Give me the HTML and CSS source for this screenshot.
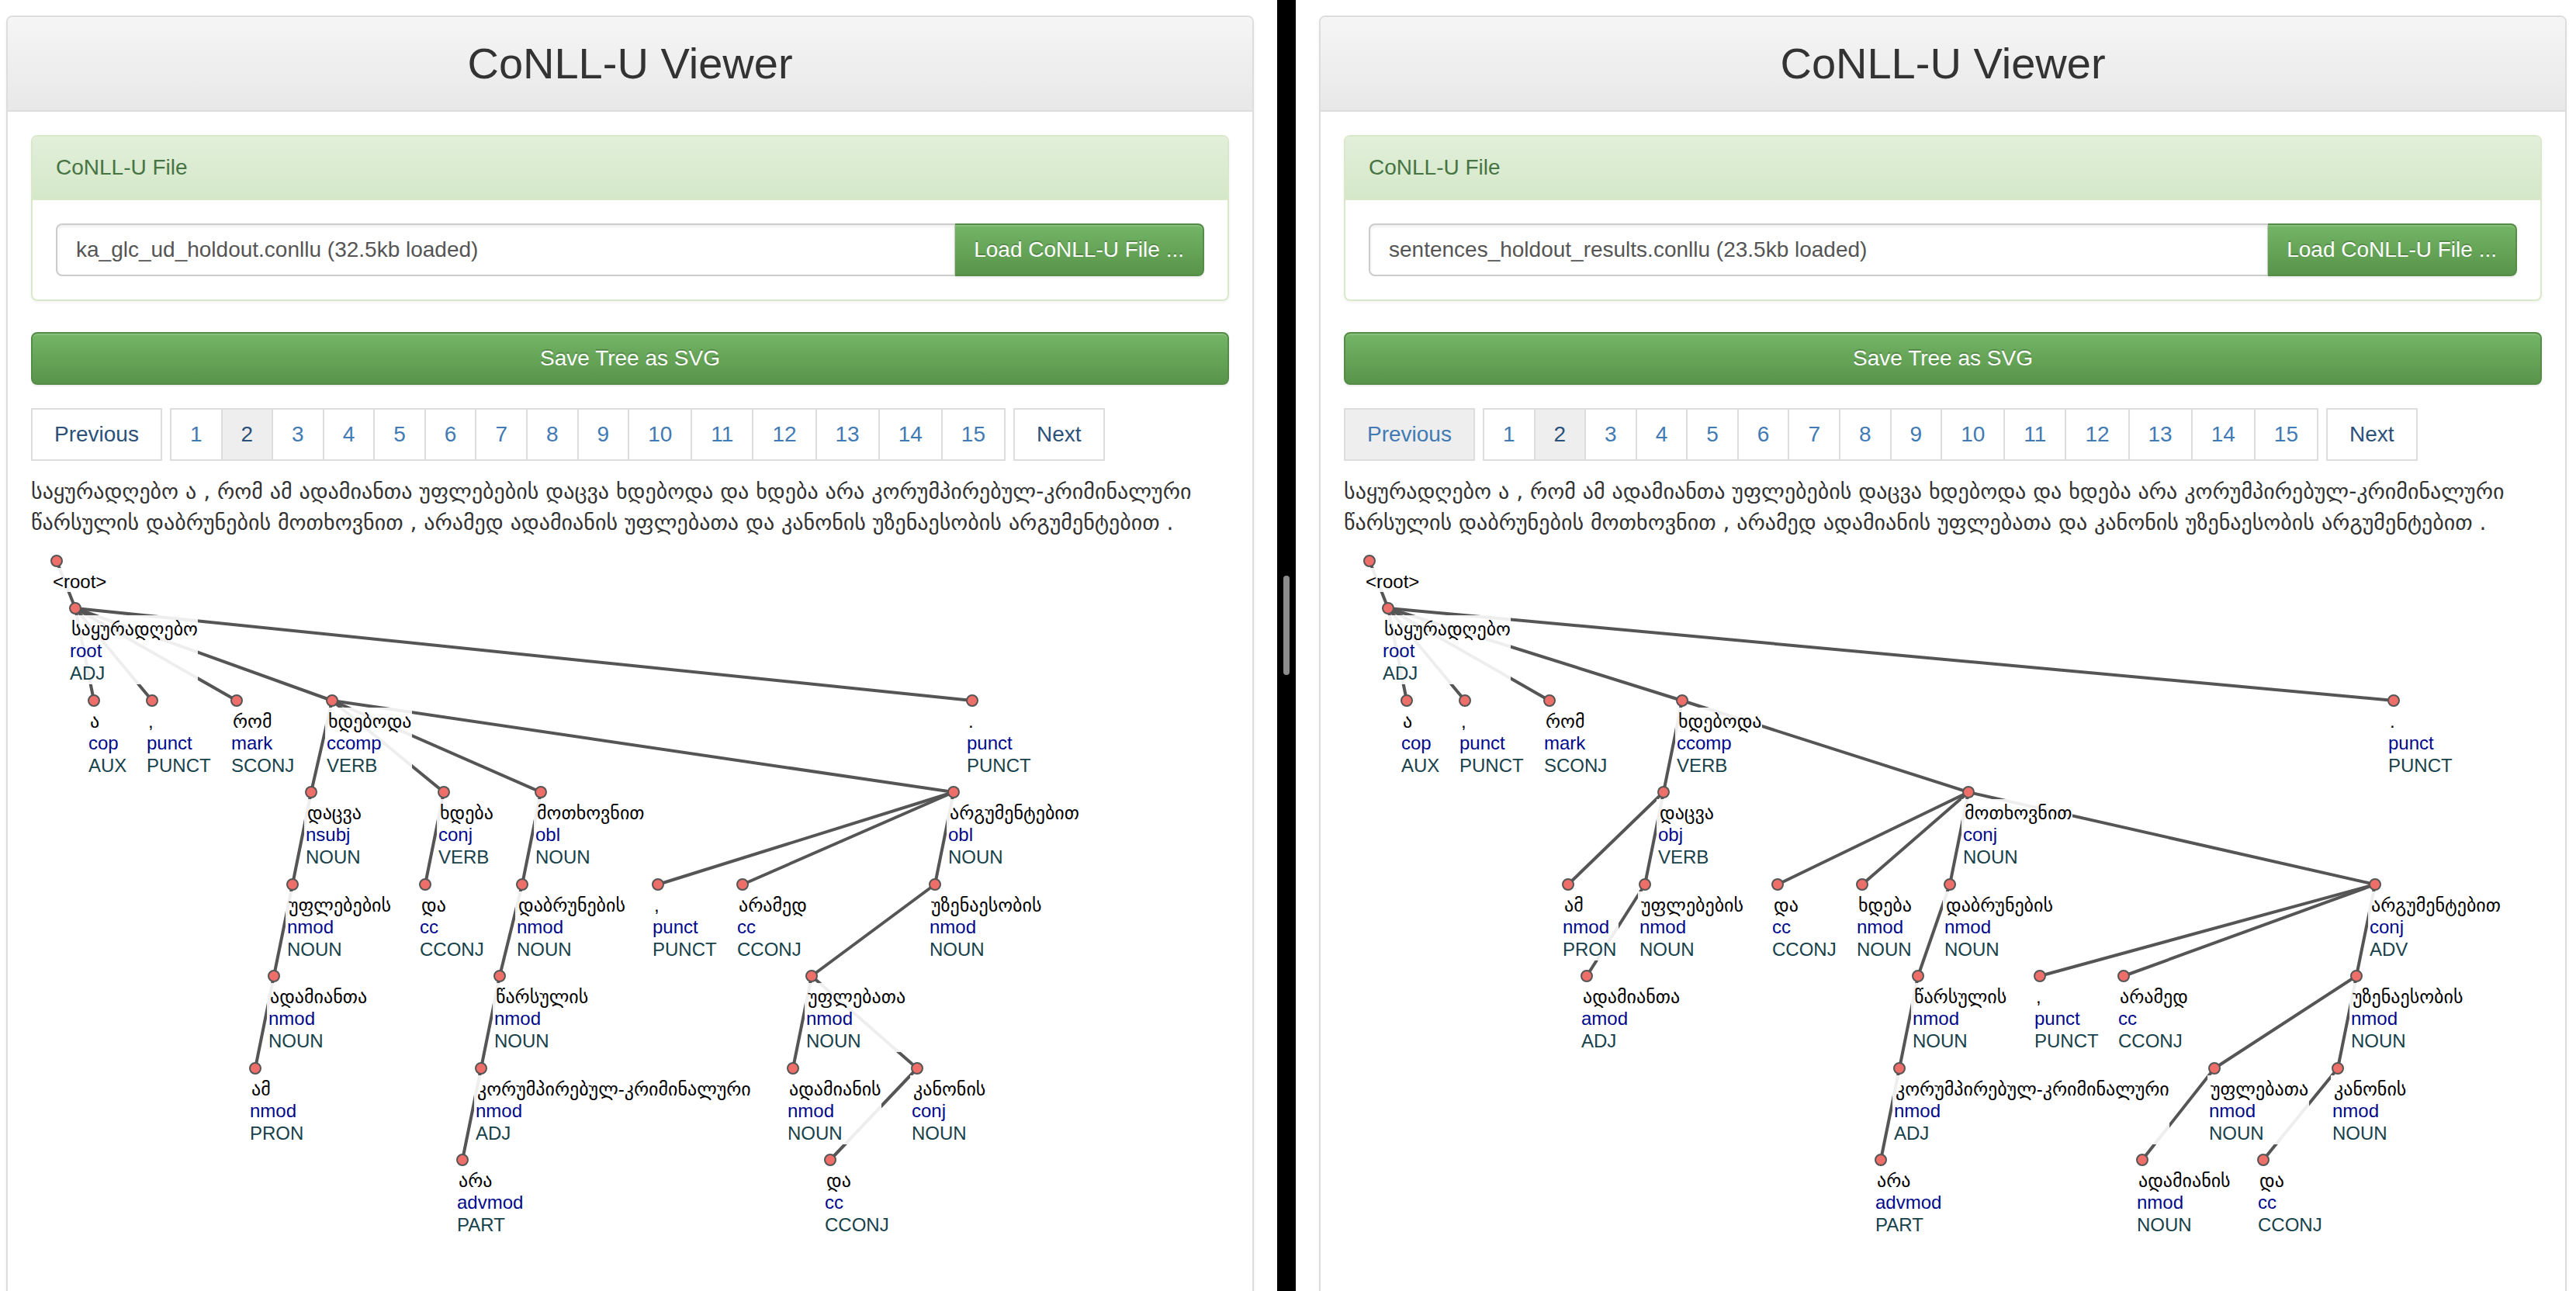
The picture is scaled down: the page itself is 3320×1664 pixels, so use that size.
FILE: index.html
```html
<!DOCTYPE html>
<html lang="en">
<head>
<meta charset="utf-8">
<title>CoNLL-U Viewer</title>
<link rel="stylesheet" href="styles.css">
</head>
<body>
<div class="split">
  <main class="pane pane-left">
    <section class="panel">
      <header class="panel-heading"><h1 class="title">CoNLL-U Viewer</h1></header>
      <div class="panel-body">
        <div class="file-panel">
          <label class="file-heading" for="file-a">CoNLL-U File</label>
          <div class="file-body">
            <input class="file-name" id="file-a" type="text" readonly value="ka_glc_ud_holdout.conllu (32.5kb loaded)">
            <button class="btn btn-load" type="button">Load CoNLL-U File ...</button>
          </div>
        </div>
        <button class="btn btn-save" type="button">Save Tree as SVG</button>
        <nav class="pager" aria-label="Sentences">
          <a class="page step" href="#">Previous</a>
          <div class="pages">
            <a class="page" href="#">1</a><a class="page current" href="#">2</a><a class="page" href="#">3</a><a class="page" href="#">4</a><a class="page" href="#">5</a><a class="page" href="#">6</a><a class="page" href="#">7</a><a class="page" href="#">8</a><a class="page" href="#">9</a><a class="page" href="#">10</a><a class="page" href="#">11</a><a class="page" href="#">12</a><a class="page" href="#">13</a><a class="page" href="#">14</a><a class="page" href="#">15</a>
          </div>
          <a class="page step" href="#">Next</a>
        </nav>
        <p class="sentence" lang="ka">საყურადღებო ა , რომ ამ ადამიანთა უფლებების დაცვა ხდებოდა და ხდება არა კორუმპირებულ-კრიმინალური წარსულის დაბრუნების მოთხოვნით , არამედ ადამიანის უფლებათა და კანონის უზენაესობის არგუმენტებით .</p>
        <svg class="tree" id="tree-a" lang="ka"></svg>
      </div>
    </section>
  </main>
  <div class="divider"><div class="grip"></div></div>
  <main class="pane pane-right">
    <section class="panel">
      <header class="panel-heading"><h1 class="title">CoNLL-U Viewer</h1></header>
      <div class="panel-body">
        <div class="file-panel">
          <label class="file-heading" for="file-b">CoNLL-U File</label>
          <div class="file-body">
            <input class="file-name" id="file-b" type="text" readonly value="sentences_holdout_results.conllu (23.5kb loaded)">
            <button class="btn btn-load" type="button">Load CoNLL-U File ...</button>
          </div>
        </div>
        <button class="btn btn-save" type="button">Save Tree as SVG</button>
        <nav class="pager" aria-label="Sentences">
          <a class="page step hovered" href="#">Previous</a>
          <div class="pages">
            <a class="page" href="#">1</a><a class="page current" href="#">2</a><a class="page" href="#">3</a><a class="page" href="#">4</a><a class="page" href="#">5</a><a class="page" href="#">6</a><a class="page" href="#">7</a><a class="page" href="#">8</a><a class="page" href="#">9</a><a class="page" href="#">10</a><a class="page" href="#">11</a><a class="page" href="#">12</a><a class="page" href="#">13</a><a class="page" href="#">14</a><a class="page" href="#">15</a>
          </div>
          <a class="page step" href="#">Next</a>
        </nav>
        <p class="sentence" lang="ka">საყურადღებო ა , რომ ამ ადამიანთა უფლებების დაცვა ხდებოდა და ხდება არა კორუმპირებულ-კრიმინალური წარსულის დაბრუნების მოთხოვნით , არამედ ადამიანის უფლებათა და კანონის უზენაესობის არგუმენტებით .</p>
        <svg class="tree" id="tree-b" lang="ka"></svg>
      </div>
    </section>
  </main>
</div>
<script src="tree.js"></script>
</body>
</html>
```
FILE: styles.css
```css
* { box-sizing: border-box; }

body {
  margin: 0;
  background: #fff;
  color: #333;
  font: 28px/40px "Liberation Sans", "DejaVu Sans", sans-serif;
}

.split {
  display: flex;
  height: 100vh;
  overflow: hidden;
}

.pane {
  box-sizing: content-box;
  flex: 1 1 0;
  min-width: 0;
  padding-top: 20px;
}
.pane-left { padding-left: 8px; padding-right: 30px; }
.pane-right { padding-left: 30px; padding-right: 12px; }

.divider {
  flex: 0 0 24px;
  display: flex;
  align-items: center;
  justify-content: center;
  padding-bottom: 52px;
  background: #000;
}
.grip {
  width: 8px;
  height: 128px;
  border-radius: 4px;
  background: #8c8c8c;
}

.panel {
  border: 2px solid #ddd;
  border-radius: 8px;
  box-shadow: 0 2px 4px rgba(0, 0, 0, .05);
}
.panel-heading {
  padding: 20px 30px;
  border-bottom: 2px solid #ddd;
  border-radius: 6px 6px 0 0;
  background: linear-gradient(#f5f5f5, #e8e8e8);
}
.title {
  margin: 0;
  font-size: 56px;
  font-weight: 400;
  line-height: 80px;
  text-align: center;
}
.panel-body { padding: 30px; }

.file-panel {
  margin-bottom: 40px;
  border: 2px solid #d9e8c9;
  border-radius: 8px;
  box-shadow: 0 2px 4px rgba(0, 0, 0, .05);
}
.file-heading {
  display: block;
  padding: 20px 30px;
  border-bottom: 2px solid #d9e8c9;
  border-radius: 6px 6px 0 0;
  background: linear-gradient(#e2efda, #d4e8c9);
  color: #477443;
}
.file-body {
  display: flex;
  padding: 30px;
}
.file-name {
  flex: 1;
  min-width: 0;
  height: 68px;
  padding: 12px 24px;
  border: 2px solid #ccc;
  border-right-width: 1px;
  border-radius: 8px 0 0 8px;
  box-shadow: inset 0 2px 4px rgba(0, 0, 0, .08);
  color: #555;
  font: inherit;
}

.btn {
  height: 68px;
  padding: 12px 24px;
  border: 2px solid #558c47;
  border-radius: 8px;
  background: linear-gradient(#74b566, #58944a);
  box-shadow: inset 0 2px 0 rgba(255, 255, 255, .15), 0 2px 2px rgba(0, 0, 0, .08);
  color: #fff;
  font: inherit;
  text-shadow: 0 -2px 0 rgba(0, 0, 0, .2);
}
.btn-load {
  border-left: 0;
  border-radius: 0 8px 8px 0;
}
.btn-save {
  display: block;
  width: 100%;
}

.pager {
  display: flex;
  gap: 10px;
  margin: 30px 0 20px;
}
.pages { display: flex; }
.page {
  padding: 12px 24px;
  border: 2px solid #ddd;
  color: #427ab4;
  text-decoration: none;
}
.pages .page + .page { margin-left: -2px; }
.page.step { padding: 12px 28px; color: #2b517a; }
.page.current { background: #eee; color: #2b517a; }
.page.hovered { background: #eee; color: #427ab4; }

.sentence {
  margin: 0;
  font-family: "DejaVu Sans", sans-serif;
}

.tree {
  display: block;
  width: 100%;
  height: 1000px;
  font-size: 24px;
}
.edge { stroke: #555; stroke-width: 4; }
.plate { fill: #fff; fill-opacity: .9; }
.node { fill: #ee6f69; stroke: #555; stroke-width: 2; }
.form { fill: #000; }
.deprel { fill: #00098b; }
.upos { fill: #17414a; }
```
FILE: tree.js
```js
// Vertical position of each depth of the tree.
const LEVELS = [29, 90, 209, 327, 446, 564, 683, 801];

// Each row: x, depth, index of the head, form, relation, part of speech.
const trees = {
  "tree-a": [
    [33, 0, -1, "<root>"],
    [57, 1, 0, "საყურადღებო", "root", "ADJ"],
    [81, 2, 1, "ა", "cop", "AUX"],
    [156, 2, 1, ",", "punct", "PUNCT"],
    [265, 2, 1, "რომ", "mark", "SCONJ"],
    [388, 2, 1, "ხდებოდა", "ccomp", "VERB"],
    [1213, 2, 1, ".", "punct", "PUNCT"],
    [361, 3, 5, "დაცვა", "nsubj", "NOUN"],
    [532, 3, 5, "ხდება", "conj", "VERB"],
    [657, 3, 5, "მოთხოვნით", "obl", "NOUN"],
    [1189, 3, 5, "არგუმენტებით", "obl", "NOUN"],
    [337, 4, 7, "უფლებების", "nmod", "NOUN"],
    [508, 4, 8, "და", "cc", "CCONJ"],
    [633, 4, 9, "დაბრუნების", "nmod", "NOUN"],
    [808, 4, 10, ",", "punct", "PUNCT"],
    [917, 4, 10, "არამედ", "cc", "CCONJ"],
    [1165, 4, 10, "უზენაესობის", "nmod", "NOUN"],
    [313, 5, 11, "ადამიანთა", "nmod", "NOUN"],
    [604, 5, 13, "წარსულის", "nmod", "NOUN"],
    [1006, 5, 16, "უფლებათა", "nmod", "NOUN"],
    [289, 6, 17, "ამ", "nmod", "PRON"],
    [580, 6, 18, "კორუმპირებულ-კრიმინალური", "nmod", "ADJ"],
    [982, 6, 19, "ადამიანის", "nmod", "NOUN"],
    [1142, 6, 19, "კანონის", "conj", "NOUN"],
    [556, 7, 21, "არა", "advmod", "PART"],
    [1030, 7, 23, "და", "cc", "CCONJ"]
  ],
  "tree-b": [
    [33, 0, -1, "<root>"],
    [57, 1, 0, "საყურადღებო", "root", "ADJ"],
    [81, 2, 1, "ა", "cop", "AUX"],
    [156, 2, 1, ",", "punct", "PUNCT"],
    [265, 2, 1, "რომ", "mark", "SCONJ"],
    [436, 2, 1, "ხდებოდა", "ccomp", "VERB"],
    [1353, 2, 1, ".", "punct", "PUNCT"],
    [412, 3, 5, "დაცვა", "obj", "VERB"],
    [805, 3, 5, "მოთხოვნით", "conj", "NOUN"],
    [289, 4, 7, "ამ", "nmod", "PRON"],
    [388, 4, 7, "უფლებების", "nmod", "NOUN"],
    [559, 4, 8, "და", "cc", "CCONJ"],
    [668, 4, 8, "ხდება", "nmod", "NOUN"],
    [781, 4, 8, "დაბრუნების", "nmod", "NOUN"],
    [1329, 4, 8, "არგუმენტებით", "conj", "ADV"],
    [313, 5, 10, "ადამიანთა", "amod", "ADJ"],
    [740, 5, 13, "წარსულის", "nmod", "NOUN"],
    [897, 5, 14, ",", "punct", "PUNCT"],
    [1005, 5, 14, "არამედ", "cc", "CCONJ"],
    [1305, 5, 14, "უზენაესობის", "nmod", "NOUN"],
    [716, 6, 16, "კორუმპირებულ-კრიმინალური", "nmod", "ADJ"],
    [1122, 6, 19, "უფლებათა", "nmod", "NOUN"],
    [1281, 6, 19, "კანონის", "nmod", "NOUN"],
    [692, 7, 20, "არა", "advmod", "PART"],
    [1029, 7, 21, "ადამიანის", "nmod", "NOUN"],
    [1185, 7, 22, "და", "cc", "CCONJ"]
  ]
};

function add(parent, tag, attrs, text) {
  const el = document.createElementNS("http://www.w3.org/2000/svg", tag);
  for (const key in attrs) el.setAttribute(key, attrs[key]);
  if (text) el.textContent = text;
  parent.appendChild(el);
  return el;
}

for (const id in trees) {
  const svg = document.getElementById(id);
  const nodes = trees[id];

  for (const [x, depth, head] of nodes) {
    if (head < 0) continue;
    add(svg, "line", {
      class: "edge",
      x1: nodes[head][0], y1: LEVELS[nodes[head][1]],
      x2: x, y2: LEVELS[depth]
    });
  }

  // A translucent plate, as wide as its longest line, keeps the label legible over edges.
  for (const [x, depth, , form, deprel, upos] of nodes) {
    const y = LEVELS[depth];
    const plate = add(svg, "rect", { class: "plate", x: x - 9, y: y + 9, height: deprel ? 89 : 31 });
    const lines = [add(svg, "text", { class: "form", x: x - 5, y: y + 35 }, form)];
    if (deprel) {
      lines.push(add(svg, "text", { class: "deprel", x: x - 7, y: y + 63 }, deprel));
      lines.push(add(svg, "text", { class: "upos", x: x - 7, y: y + 92 }, upos));
    }
    plate.setAttribute("width", Math.ceil(Math.max(...lines.map(t => t.getComputedTextLength()))) + 4);
  }

  for (const [x, depth] of nodes) {
    add(svg, "circle", { class: "node", cx: x, cy: LEVELS[depth], r: 7 });
  }
}
```
